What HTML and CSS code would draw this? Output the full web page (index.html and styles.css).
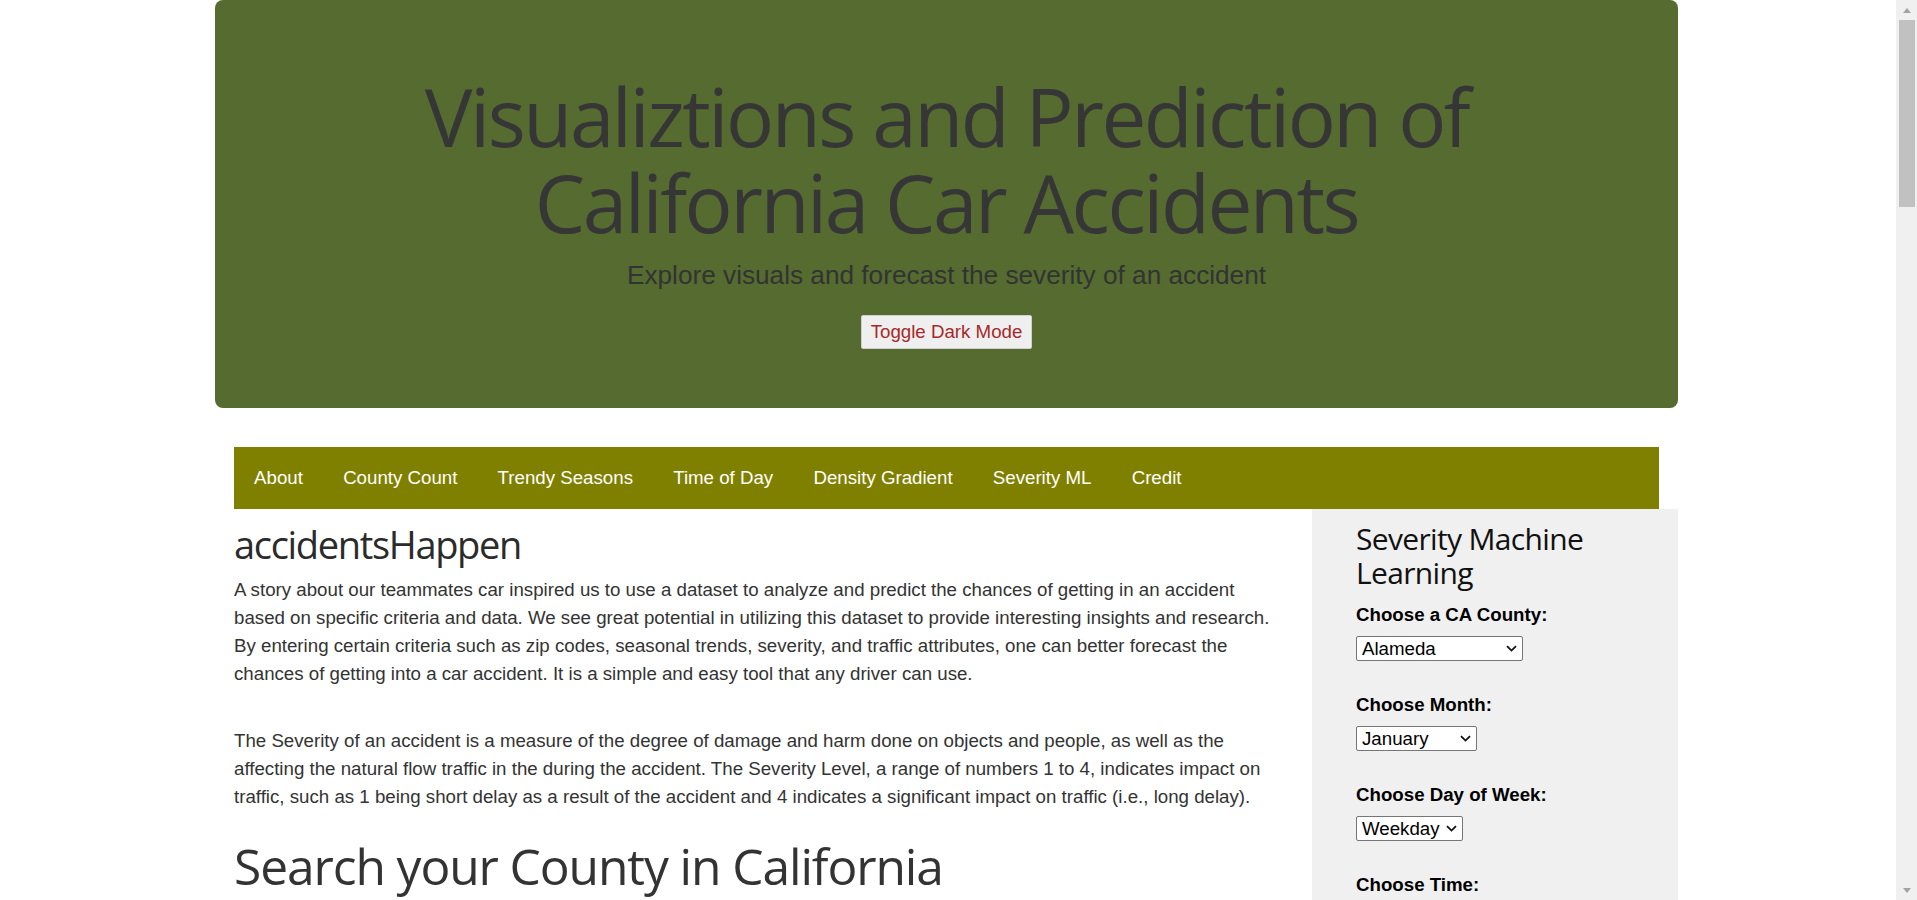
FILE: index.html
```html
<!DOCTYPE html>
<html lang="en">
<head>
<meta charset="utf-8">
<title>accidentsHappen</title>
<link rel="stylesheet" href="styles.css">
</head>
<body>
<div class="page">
  <header class="hero">
    <h1 class="hero-title">Visualiztions and Prediction of California Car Accidents</h1>
    <p class="hero-sub">Explore visuals and forecast the severity of an accident</p>
    <button class="toggle" type="button">Toggle Dark Mode</button>
  </header>

  <nav class="topnav">
    <a href="#about">About</a>
    <a href="#county">County Count</a>
    <a href="#seasons">Trendy Seasons</a>
    <a href="#time">Time of Day</a>
    <a href="#density">Density Gradient</a>
    <a href="#severity">Severity ML</a>
    <a href="#credit">Credit</a>
  </nav>

  <div class="layout">
    <main class="main" id="about">
      <h2 class="brand">accidentsHappen</h2>
      <p class="para para-first">A story about our teammates car inspired us to use a dataset to analyze and predict the chances of getting in an accident based on specific criteria and data. We see great potential in utilizing this dataset to provide interesting insights and research. By entering certain criteria such as zip codes, seasonal trends, severity, and traffic attributes, one can better forecast the chances of getting into a car accident. It is a simple and easy tool that any driver can use.</p>
      <p class="para para-second">The Severity of an accident is a measure of the degree of damage and harm done on objects and people, as well as the affecting the natural flow traffic in the during the accident. The Severity Level, a range of numbers 1 to 4, indicates impact on traffic, such as 1 being short delay as a result of the accident and 4 indicates a significant impact on traffic (i.e., long delay).</p>
      <h2 class="section-title" id="county">Search your County in California</h2>
      <div class="search-row">
        <input class="search-input" type="text" placeholder="Enter a county name">
        <button class="search-btn" type="button">Search</button>
      </div>
      <div class="chart-box"></div>
    </main>

    <aside class="side" id="severity">
      <h3 class="side-title">Severity Machine Learning</h3>
      <form class="ml-form">
        <div class="field">
          <label class="field-label" for="county-sel">Choose a CA County:</label>
          <span class="select-wrap">
            <select id="county-sel" class="sel sel-county">
              <option>Alameda</option>
              <option>Contra Costa</option>
              <option>Los Angeles</option>
              <option>San Diego</option>
            </select>
            <svg class="chev" width="11" height="7" viewBox="0 0 11 7"><path d="M1 1.2 L5.5 5.6 L10 1.2" fill="none" stroke="#111" stroke-width="1.8"/></svg>
          </span>
        </div>
        <div class="field">
          <label class="field-label" for="month-sel">Choose Month:</label>
          <span class="select-wrap">
            <select id="month-sel" class="sel sel-month">
              <option>January</option>
              <option>February</option>
              <option>September</option>
            </select>
            <svg class="chev" width="11" height="7" viewBox="0 0 11 7"><path d="M1 1.2 L5.5 5.6 L10 1.2" fill="none" stroke="#111" stroke-width="1.8"/></svg>
          </span>
        </div>
        <div class="field">
          <label class="field-label" for="day-sel">Choose Day of Week:</label>
          <span class="select-wrap">
            <select id="day-sel" class="sel sel-day">
              <option>Weekday</option>
              <option>Weekend</option>
            </select>
            <svg class="chev" width="11" height="7" viewBox="0 0 11 7"><path d="M1 1.2 L5.5 5.6 L10 1.2" fill="none" stroke="#111" stroke-width="1.8"/></svg>
          </span>
        </div>
        <div class="field">
          <label class="field-label" for="time-sel">Choose Time:</label>
          <span class="select-wrap">
            <select id="time-sel" class="sel sel-time">
              <option>Morning</option>
              <option>Afternoon</option>
              <option>Evening</option>
            </select>
            <svg class="chev" width="11" height="7" viewBox="0 0 11 7"><path d="M1 1.2 L5.5 5.6 L10 1.2" fill="none" stroke="#111" stroke-width="1.8"/></svg>
          </span>
        </div>
      </form>
    </aside>
  </div>
</div>

<div class="scrollbar" aria-hidden="true">
  <span class="sb-btn"><span class="sb-arrow-up"></span></span>
  <span class="sb-thumb"></span>
  <span class="sb-space"></span>
  <span class="sb-btn"><span class="sb-arrow-down"></span></span>
</div>
</body>
</html>
```

FILE: styles.css
```css
* {
  box-sizing: border-box;
}

html,
body {
  margin: 0;
  padding: 0;
}

body {
  font-family: "Liberation Sans", Arial, sans-serif;
  font-size: 18.7px;
  color: #333;
  background: #fff;
}

.page {
  width: 1463px;
  margin-left: 215px;
}

/* ---------- hero ---------- */
.hero {
  background: #556b2f;
  border-radius: 8px;
  padding: 73px 0 59px;
  text-align: center;
}

.hero-title {
  margin: 0;
  padding: 0 130px;
  font-family: "Open Sans", "Noto Sans", sans-serif;
  font-weight: 400;
  font-size: 80px;
  line-height: 86px;
  letter-spacing: -0.031em;
  color: #363636;
}

.hero-sub {
  margin: 15px 0 0;
  font-size: 26.2px;
  line-height: 30px;
  color: #333;
}

.toggle {
  display: block;
  margin: 25px auto 0;
  height: 34px;
  padding: 0 9px;
  font-family: "Liberation Sans", Arial, sans-serif;
  font-size: 18.7px;
  color: #a52a2a;
  background: #efefef;
  border: 1px solid #cfcfcf;
  border-radius: 2px;
}

/* ---------- nav ---------- */
.topnav {
  display: flex;
  height: 62px;
  margin: 39px 19px 0;
  background: #808000;
}

.topnav a {
  display: block;
  padding: 0 20.1px;
  line-height: 62px;
  color: #fff;
  text-decoration: none;
}

/* ---------- layout ---------- */
.layout {
  display: flex;
  align-items: flex-start;
}

.main {
  flex: 1 1 auto;
  min-width: 0;
  padding: 0 30px 0 19px;
}

.brand {
  margin: 8px 0 0;
  font-family: "Open Sans", "Noto Sans", sans-serif;
  font-weight: 400;
  font-size: 38px;
  line-height: 54px;
  letter-spacing: -0.035em;
  color: #2b2b2b;
}

.para {
  margin: 0;
  line-height: 28px;
}

.para-first {
  margin-top: 5px;
}

.para-second {
  margin-top: 39px;
}

.section-title {
  margin: 23px 0 0;
  font-family: "Open Sans", "Noto Sans", sans-serif;
  font-weight: 400;
  font-size: 49.7px;
  line-height: 64px;
  letter-spacing: -0.022em;
  color: #333;
}

.search-row {
  display: flex;
  gap: 10px;
  margin-top: 16px;
}

.search-input {
  width: 300px;
  height: 30px;
  font: inherit;
  border: 1px solid #767676;
}

.search-btn {
  height: 30px;
  font: inherit;
}

.chart-box {
  height: 500px;
  margin-top: 20px;
  background: #fafafa;
}

/* ---------- sidebar ---------- */
.side {
  flex: none;
  width: 366px;
  min-height: 900px;
  padding: 13px 20px 40px 44px;
  background: #f0f0f0;
}

.side-title {
  margin: 0;
  font-family: "Open Sans", "Noto Sans", sans-serif;
  font-weight: 400;
  font-size: 30px;
  line-height: 34px;
  letter-spacing: -0.022em;
  color: #111;
}

.ml-form {
  display: flex;
  flex-direction: column;
  gap: 33px;
  margin-top: 14px;
}

.field-label {
  display: block;
  font-weight: 700;
  line-height: 21.5px;
  color: #000;
}

.select-wrap {
  position: relative;
  display: inline-block;
  margin-top: 10.5px;
}

.sel {
  display: block;
  height: 25px;
  padding: 0 20px 0 5px;
  font-family: "Liberation Sans", Arial, sans-serif;
  font-size: 18.7px;
  color: #000;
  background: #fff;
  border: 1px solid #767676;
  border-radius: 2px;
  -webkit-appearance: none;
  appearance: none;
}

.sel-county { width: 167px; }
.sel-month { width: 121px; }
.sel-day { width: 107px; }
.sel-time { width: 121px; }

.chev {
  position: absolute;
  right: 6px;
  top: 9px;
  pointer-events: none;
}

/* ---------- window scrollbar ---------- */
.scrollbar {
  position: fixed;
  top: 0;
  right: 0;
  display: flex;
  flex-direction: column;
  width: 21px;
  height: 100vh;
  background: #f0f0f0;
}

.sb-btn {
  display: flex;
  align-items: center;
  justify-content: center;
  height: 20px;
  flex: none;
}

.sb-arrow-up,
.sb-arrow-down {
  width: 0;
  height: 0;
  border-left: 4.5px solid transparent;
  border-right: 4.5px solid transparent;
}

.sb-arrow-up {
  border-bottom: 5px solid #a3a3a3;
}

.sb-arrow-down {
  border-top: 5px solid #a3a3a3;
}

.sb-thumb {
  flex: none;
  height: 187px;
  margin: 0 2px 0 3px;
  background: #c1c1c1;
}

.sb-space {
  flex: 1;
}
```
